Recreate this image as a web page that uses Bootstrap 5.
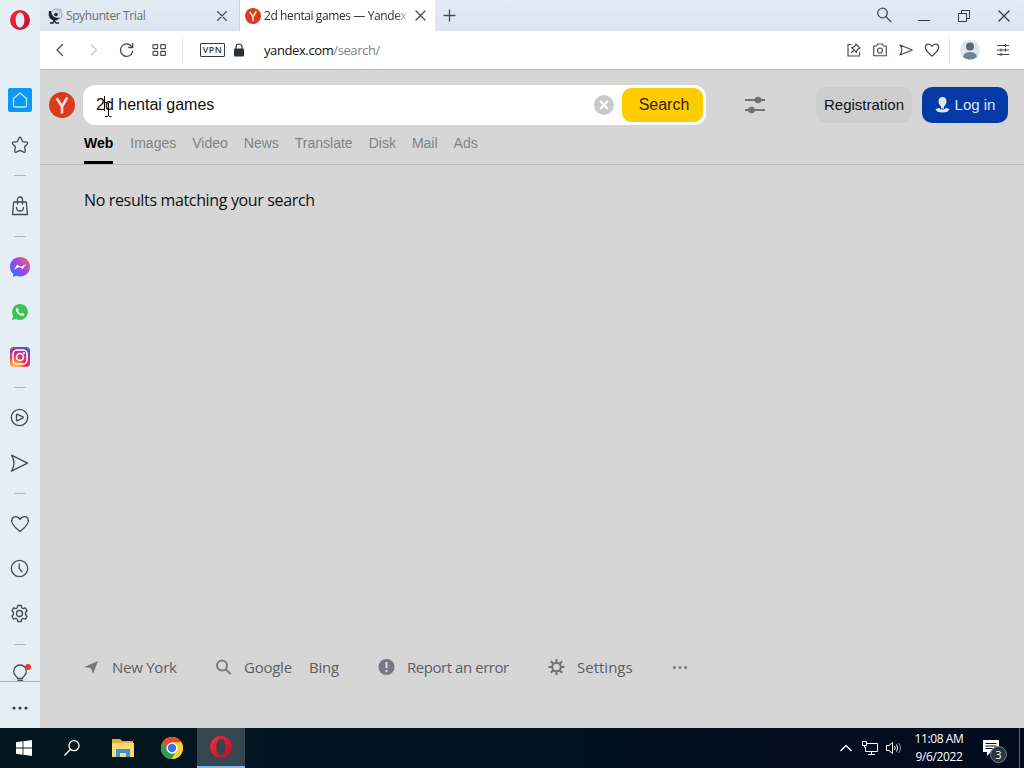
<!DOCTYPE html>
<html lang="en">
<head>
  <meta charset="UTF-8">
  <meta name="viewport" content="width=device-width, initial-scale=1.0">
  <title>2d hentai games — Yandex</title>

  <!-- Bootstrap CSS -->
  <link href="https://cdn.jsdelivr.net/npm/bootstrap@5.3.3/dist/css/bootstrap.min.css" rel="stylesheet">

  <style>
    body {
      width: 1024px;
      height: 768px;
      overflow: hidden;
      background-color: #d6d6d6;
      font-family: "Open Sans", sans-serif;
      font-size: 12px;
      line-height: 1.2;
      color: #111;
    }

    svg {
      display: block;
      flex-shrink: 0;
    }

    .line-icon {
      fill: none;
      stroke: #454b57;
      stroke-width: 1.3;
      stroke-linecap: round;
      stroke-linejoin: round;
    }

    .line-icon.fine {
      stroke-width: 1.15;
    }

    .line-icon.scaled {
      stroke-width: 1.6;
    }

    .workspace {
      height: 728px;
    }

    /* Sidebar */
    .sidebar {
      width: 40px;
      background-color: #e5edf5;
    }

    .side-logo {
      height: 40px;
      margin-bottom: 37px;
    }

    .side-item {
      height: 45px;
    }

    .side-sep {
      height: 16px;
    }

    .side-sep::before {
      content: "";
      width: 12px;
      height: 1px;
      background-color: #a9b6c1;
    }

    .side-bulb {
      height: 30px;
      padding-top: 12px;
      border-bottom: 1px solid #a9b3bd;
    }

    .side-more {
      height: 45px;
      padding-top: 7px;
    }

    /* Tabs and address bar */
    .tab-strip {
      height: 31px;
      background: linear-gradient(#e3ebf4, #dce4ed);
      color: #6b7077;
    }

    .window-tab {
      width: 200px;
      padding: 0 12px 0 8px;
      border-right: 1px solid #cbd3dc;
    }

    .window-tab.current {
      width: 195px;
      padding: 0 9px 0 5px;
      background-color: #fff;
      color: #2b2f36;
      border: 0;
    }

    .tab-title {
      width: 146px;
      margin-left: 3px;
      padding-top: 1px;
      white-space: nowrap;
      line-height: 18px;
      letter-spacing: -.4px;
    }

    .current .tab-title {
      letter-spacing: -.4px;
      -webkit-mask-image: linear-gradient(90deg, #000 90%, transparent);
      mask-image: linear-gradient(90deg, #000 90%, transparent);
    }

    .win-btn {
      width: 40px;
    }

    .address-bar {
      height: 39px;
      padding-left: 3px;
      background-color: #fff;
      border-bottom: 1px solid #b4b4b4;
    }

    .nav-slot {
      width: 33px;
    }

    .tool-slot {
      width: 26px;
    }

    .bar-rule {
      width: 1px;
      height: 27px;
      background-color: #e8e8e8;
    }

    .nav-rule {
      margin-left: 7px;
    }

    .vpn {
      width: 25px;
      height: 14px;
      margin-left: 17px;
      border: 1px solid #333b42;
      border-radius: 1px;
      font-size: 9px;
      font-weight: 600;
      letter-spacing: .4px;
      color: #333b42;
    }

    .url {
      margin-left: 19px;
      padding-top: 1px;
      font-size: 13px;
      letter-spacing: -.4px;
    }

    .url span {
      color: #7c8489;
    }

    .avatar {
      margin-left: 10px;
    }

    .easy-setup {
      margin: 0 15px 0 17px;
    }

    /* Yandex page */
    .ya-head {
      height: 95px;
      border-bottom: 1px solid #bdbdbd;
      font-family: "Liberation Sans", Arial, sans-serif;
    }

    .ya-row {
      height: 40px;
      margin-top: 15px;
      padding-left: 9px;
    }

    .search-box {
      width: 623px;
      height: 40px;
      margin-left: 8px;
      padding: 0 3px 0 13px;
      background-color: #fff;
      border-radius: 12px;
      font-size: 16px;
    }

    .search-btn {
      width: 81px;
      height: 34px;
      margin-left: 8px;
      padding: 0 0 0 3px;
      background-color: #fc0;
      border: 0;
      border-radius: 9px;
      font-size: 16px;
      line-height: 1.2;
      color: #33210a;
    }

    .text-cursor {
      left: 8px;
      top: 1px;
    }

    .filters {
      margin-left: 39px;
    }

    .user-btn {
      height: 36px;
      padding: 0;
      border: 0;
      border-radius: 10px;
      font-size: 15px;
    }

    .btn-reg {
      width: 96px;
      margin-left: 51px;
      background-color: #cecece;
      color: #111;
    }

    .btn-login {
      width: 86px;
      margin-left: 10px;
      background-color: #033aa5;
      color: #dfe6f4;
    }

    .ya-tabs {
      height: 39px;
      padding-left: 44px;
      gap: 16px;
      font-size: 14px;
    }

    .ya-tabs a {
      padding-top: 10px;
      color: #838383;
      text-decoration: none;
    }

    .ya-tabs a.on {
      margin-right: 1px;
      color: #000;
      font-weight: bold;
      border-bottom: 3px solid #000;
    }

    .message {
      padding: 26px 0 0 44px;
      font-size: 16px;
      letter-spacing: -.35px;
    }

    .ya-foot {
      height: 30px;
      margin-bottom: 46px;
      padding-left: 43px;
      font-size: 15px;
      letter-spacing: -.25px;
      color: #5c5e63;
    }

    .foot-city { width: 103px; margin-left: 13px; }
    .foot-google { width: 65px; margin-left: 13px; }
    .foot-bing { width: 69px; }
    .foot-report { width: 141px; margin-left: 12px; letter-spacing: -.45px; }
    .foot-settings { width: 95px; margin-left: 12px; letter-spacing: 0; }

    /* Taskbar */
    .taskbar {
      height: 40px;
      background: linear-gradient(90deg, #021620, #02121f 55%, #020b1c);
      color: #fff;
    }

    .task-slot {
      width: 48px;
      height: 40px;
    }

    .task-slot.files {
      margin-left: 3px;
    }

    .task-slot.chrome {
      margin-left: 1px;
    }

    .task-slot.running {
      margin-left: 1px;
      background-color: #35464f;
      border-bottom: 2px solid #76b9ed;
    }

    .tray {
      gap: 8px;
    }

    .tray-up {
      margin-right: 2px;
    }

    .clock {
      width: 64px;
      margin-left: -3px;
      line-height: 18px;
      letter-spacing: -.4px;
    }

    .notices {
      margin: 0 20px 0 4px;
    }

    .notice-count {
      left: 7px;
      top: 6px;
      width: 17px;
      height: 17px;
      background-color: #2b3640;
      border: 1px solid #78818a;
      border-radius: 50%;
      font-size: 11px;
    }

    .show-desktop {
      width: 5px;
      height: 40px;
      border-left: 1px solid #59616b;
    }
  </style>
</head>

<body>

<!-- Shared shapes -->
<svg width="0" height="0" class="position-absolute">
  <defs>
    <linearGradient id="operaRed" x1="0" y1="0" x2="1" y2="1">
      <stop offset="0" stop-color="#ff2942"/><stop offset="1" stop-color="#b30f26"/>
    </linearGradient>
    <linearGradient id="msgr" x1="0" y1="1" x2="1" y2="0">
      <stop offset="0" stop-color="#0a8cff"/><stop offset=".45" stop-color="#9146f5"/><stop offset="1" stop-color="#ff6268"/>
    </linearGradient>
    <radialGradient id="insta" cx=".25" cy="1.05" r="1.15">
      <stop offset="0" stop-color="#ffd55a"/><stop offset=".25" stop-color="#fa9242"/><stop offset=".5" stop-color="#de365e"/><stop offset=".75" stop-color="#b03795"/><stop offset="1" stop-color="#5358c8"/>
    </radialGradient>
    <symbol id="opera" viewBox="0 0 22 22">
      <path fill="url(#operaRed)" fill-rule="evenodd" d="M11 1a10 10 0 1 1 0 20a10 10 0 0 1 0-20zM11 3.400c-2.500 0-4.400 3.300-4.400 7.600s1.900 7.600 4.400 7.600s4.400-3.300 4.400-7.600s-1.900-7.600-4.400-7.600z"/>
    </symbol>
    <symbol id="yandex" viewBox="0 0 26 26">
      <circle cx="13" cy="13" r="13" fill="#dc3a1c"/>
      <path d="M7.700 6.300l5.300 8.200M18.300 5.300L13 14.500V21.500" fill="none" stroke="#f6dfda" stroke-width="2.700"/>
    </symbol>
    <symbol id="send" viewBox="0 0 20 20">
      <path d="M2 2L18 10L2 18Q7 10 2 2z"/>
    </symbol>
    <symbol id="heart" viewBox="0 0 20 20">
      <path d="M10 17.500C6.500 14.500 1.700 11 1.700 6.900C1.700 4.200 3.500 2.600 5.700 2.600C7.700 2.600 9.100 3.700 10 5.500C10.900 3.700 12.300 2.600 14.300 2.600C16.500 2.600 18.300 4.200 18.300 6.900C18.300 11 13.500 14.500 10 17.500z"/>
    </symbol>
  </defs>
</svg>

<div class="workspace d-flex">

  <nav class="sidebar d-flex flex-column">
    <div class="side-logo d-flex align-items-center justify-content-center"><svg width="22" height="22"><use href="#opera"/></svg></div>
    <div class="side-item d-flex align-items-center justify-content-center">
      <svg width="24" height="24" viewBox="0 0 24 24"><rect width="24" height="24" rx="2" fill="#0d98f5"/><path d="M5.500 10.500L12 5L18.500 10.500V17.500Q18.500 19 17 19H7Q5.500 19 5.500 17.500z" fill="none" stroke="#a9f0ff" stroke-width="1.300" stroke-linejoin="round"/></svg>
    </div>
    <div class="side-item d-flex align-items-center justify-content-center">
      <svg class="line-icon" width="18" height="18" viewBox="0 0 18 18"><path d="M9 1.200Q9.600 1.200 10 2L11.600 5.600L15.700 6.200Q17.300 6.600 16.300 7.900L13.600 10.700L14.300 15Q14.300 16.800 12.700 16.200L9 14.300L5.300 16.200Q3.700 16.800 3.700 15L4.400 10.700L1.700 7.900Q.7 6.600 2.300 6.200L6.400 5.600L8 2Q8.400 1.200 9 1.200z"/></svg>
    </div>
    <div class="side-sep d-flex align-items-center justify-content-center"></div>
    <div class="side-item d-flex align-items-center justify-content-center">
      <svg class="line-icon" width="18" height="20" viewBox="0 0 18 20"><path d="M2.700 6H15.300L16.500 18.500H1.500zM6.500 8V3.500Q6.500 1 9 1T11.500 3.500V8M5.500 11.500Q5.500 15 9 15T12.500 11.500"/></svg>
    </div>
    <div class="side-sep d-flex align-items-center justify-content-center"></div>
    <div class="side-item d-flex align-items-center justify-content-center">
      <svg width="20" height="20" viewBox="0 0 20 20"><path fill="url(#msgr)" d="M10 0C4.300 0 0 4.100 0 9.700c0 2.900 1.200 5.400 3.100 7.100V20l3-1.200c1.200.4 2.500.6 3.900.6c5.700 0 10-4.100 10-9.700S15.700 0 10 0z"/><path d="M4 12.500L7.200 7.600L10.700 9.700L16 7L12.700 12.100L9.300 9.900z" fill="#fff"/></svg>
    </div>
    <div class="side-item d-flex align-items-center justify-content-center">
      <svg width="16" height="16" viewBox="0 0 16 16"><path fill="#3bc257" d="M8 0a8 8 0 1 1-3.900 15L0 16l1.100-4A8 8 0 0 1 8 0z"/><path d="M5.400 3.700C3.300 4.700 3.700 7 5.700 9.300S10.500 12.700 12.200 10.900Q12.500 10.100 11.800 9.700L10.300 9Q9.800 8.800 9.400 9.500Q8.900 10 7.900 9.300Q6.600 8.300 6.100 7.200Q6.700 6.600 6.700 6L6 4.200Q5.800 3.700 5.400 3.700z" fill="#fff"/></svg>
    </div>
    <div class="side-item d-flex align-items-center justify-content-center">
      <svg width="20" height="20" viewBox="0 0 20 20"><rect width="20" height="20" rx="4" fill="url(#insta)"/><g fill="none" stroke="#fff" stroke-width="1.500"><rect x="3" y="3" width="14" height="14" rx="4"/><circle cx="10" cy="10" r="3.500"/></g><circle cx="14" cy="6" r="1" fill="#fff"/></svg>
    </div>
    <div class="side-sep d-flex align-items-center justify-content-center"></div>
    <div class="side-item d-flex align-items-center justify-content-center">
      <svg class="line-icon" width="20" height="19" viewBox="0 0 20 19"><circle cx="9.500" cy="9.500" r="8.200"/><path d="M6.500 6.800Q6.500 6 7.300 6.300L12.800 8.900Q13.800 9.500 12.800 10.100L7.300 12.700Q6.500 13 6.500 12.200z"/></svg>
    </div>
    <div class="side-item d-flex align-items-center justify-content-center"><svg class="line-icon" width="20" height="20" viewBox="0 0 20 20"><path d="M1.500 2.200L17.500 10.200L1.500 18.200Q6.500 10.200 1.500 2.200z"/></svg></div>
    <div class="side-sep d-flex align-items-center justify-content-center"></div>
    <div class="side-item d-flex align-items-center justify-content-center"><svg class="line-icon me-1" width="20" height="20" style="margin-left:3px"><use href="#heart"/></svg></div>
    <div class="side-item d-flex align-items-center justify-content-center">
      <svg class="line-icon" width="20" height="19" viewBox="0 0 20 19"><circle cx="9.500" cy="9.500" r="8.200"/><path d="M9.200 5V9.500L12 12.800"/></svg>
    </div>
    <div class="side-item d-flex align-items-center justify-content-center">
      <svg class="line-icon" width="20" height="19" viewBox="-.5 -.5 20 19"><path d="M7.300 1h3.400l.5 2.300l1.400.8L14.900 3.400l1.700 2.900L15 8v2l1.600 1.700l-1.700 2.900l-2.300-.7l-1.400.8l-.5 2.300H7.300l-.5-2.300l-1.400-.8l-2.300.7l-1.700-2.900L3 10V8L1.400 6.300l1.700-2.900l2.300.7l1.400-.8z"/><circle cx="9" cy="9" r="3"/></svg>
    </div>
    <div class="side-sep d-flex align-items-center justify-content-center"></div>
    <div class="side-bulb d-flex justify-content-center overflow-hidden">
      <svg width="22" height="20" viewBox="0 0 22 20"><path class="line-icon" d="M8.500 14.500Q8.300 13 6.500 11.700A6.300 6.300 0 1 1 15.500 11.700Q13.700 13 13.500 14.500zM9 16.300H13.500"/><circle cx="19" cy="3" r="3" fill="#f2342d"/></svg>
    </div>
    <div class="side-more d-flex align-items-center justify-content-center">
      <svg width="16" height="4" viewBox="0 0 16 4" fill="#3c4350"><circle cx="2" cy="2" r="1.600"/><circle cx="8" cy="2" r="1.600"/><circle cx="14" cy="2" r="1.600"/></svg>
    </div>
  </nav>

  <div class="flex-grow-1 d-flex flex-column">

    <div class="tab-strip d-flex">
      <div class="window-tab d-flex align-items-center">
        <svg width="15" height="16" viewBox="0 0 15 16"><circle cx="8.500" cy="6.500" r="5.500" fill="#d6dfe5" stroke="#96a3ad"/><path d="M8 2.500L13 1L11 6" fill="none" stroke="#abb5bd"/><path d="M1 3Q-.5 10.500 5 12.200Q9 13 12 9.500Q8 10.500 5.500 8.500Q3 6.500 3 3z" fill="#19242d"/><circle cx="8" cy="6.500" r="1.800" fill="#19242d"/><path d="M6 12L5 15H2M6 12L8 15H11" fill="none" stroke="#19242d" stroke-width="1.300"/></svg>
        <div class="tab-title">Spyhunter Trial</div>
        <svg class="line-icon fine ms-auto" width="10" height="10" viewBox="0 0 10 10"><path d="M.5.5l9 9M9.500.5l-9 9"/></svg>
      </div>
      <div class="window-tab current d-flex align-items-center">
        <svg width="16" height="16"><use href="#yandex"/></svg>
        <div class="tab-title">2d hentai games — Yandex</div>
        <svg class="line-icon ms-auto" width="11" height="11" viewBox="0 0 11 11"><path d="M1 1l9 9M10 1l-9 9"/></svg>
      </div>
      <div class="d-flex align-items-center ps-2 flex-grow-1">
        <svg class="line-icon" width="13" height="13" viewBox="0 0 13 13"><path d="M6.500 1v11M1 6.500h11"/></svg>
      </div>
      <div class="d-flex align-items-center">
        <div class="win-btn d-flex justify-content-center"><svg class="line-icon" width="16" height="18" viewBox="0 0 16 18"><circle cx="6.500" cy="6" r="4.800"/><path d="M10 9.700l5 5"/></svg></div>
        <div class="win-btn d-flex justify-content-center"><svg width="12" height="12" viewBox="0 0 12 12"><path d="M0 10.500h12" stroke="#333945"/></svg></div>
        <div class="win-btn d-flex justify-content-center"><svg width="12" height="12" viewBox="0 0 12 12" fill="none" stroke="#333945"><path d="M.5 3.500h8v8h-8zM3.500 3.500v-3h8v8h-3"/></svg></div>
        <div class="win-btn d-flex justify-content-center"><svg width="12" height="12" viewBox="0 0 12 12" stroke="#333945" stroke-width="1.200"><path d="M.5.5l11 11M11.500.5l-11 11"/></svg></div>
      </div>
    </div>

    <div class="address-bar d-flex align-items-center">
      <div class="nav-slot d-flex justify-content-center"><svg class="line-icon" width="14" height="14" viewBox="0 0 14 14"><path d="M9.500 1.500L4 7l5.500 5.500"/></svg></div>
      <div class="nav-slot d-flex justify-content-center"><svg width="14" height="14" viewBox="0 0 14 14" fill="none" stroke="#c6c8cb" stroke-width="1.300"><path d="M5 1.500L10.500 7L5 12.500"/></svg></div>
      <div class="nav-slot d-flex justify-content-center"><svg class="line-icon" width="16" height="16" viewBox="0 0 16 16"><path d="M14.700 9.500A6.200 6.200 0 1 1 14 5M14.700 1.700V5.500H10.700"/></svg></div>
      <div class="nav-slot d-flex justify-content-center"><svg class="line-icon fine" width="14" height="12" viewBox="0 0 14 12"><rect x="1" y=".6" width="4.700" height="4" rx=".7"/><rect x="8.700" y=".6" width="4.700" height="4" rx=".7"/><rect x="1" y="7.400" width="4.700" height="4" rx=".7"/><rect x="8.700" y="7.400" width="4.700" height="4" rx=".7"/></svg></div>
      <div class="bar-rule nav-rule"></div>
      <div class="vpn d-flex align-items-center justify-content-center">VPN</div>
      <svg class="ms-2" width="12" height="14" viewBox="0 0 12 14"><rect x="1" y="5.500" width="10" height="8" rx="1" fill="#2a3138"/><path d="M3 6V4Q3 1 6 1T9 4V6" fill="none" stroke="#2a3138" stroke-width="1.200"/></svg>
      <div class="url flex-grow-1">yandex.com<span>/search/</span></div>
      <div class="tool-slot d-flex justify-content-center"><svg class="line-icon fine" width="14" height="14" viewBox="0 0 14 14"><path d="M4 1.500H1V13H12.500V9.500M4.500 9.500L7 7M8.800 1L13 5.200L11.600 5.500L9.700 7.600L9.500 9.500L4.600 4.600L6.500 4.300L8.600 2.400z"/></svg></div>
      <div class="tool-slot d-flex justify-content-center"><svg class="line-icon fine" width="14" height="14" viewBox="0 0 14 14"><path d="M.7 3h2.800l1.200-2h4.600l1.200 2h2.800v9.700H.7z"/><circle cx="7" cy="7.500" r="2.500"/></svg></div>
      <div class="tool-slot d-flex justify-content-center"><svg class="line-icon fine" width="14" height="14" viewBox="0 0 14 14"><path d="M1 2L13.300 7L1 12Q4.500 7 1 2z"/></svg></div>
      <div class="tool-slot d-flex justify-content-center"><svg class="line-icon scaled" width="16" height="16"><use href="#heart"/></svg></div>
      <div class="bar-rule ms-1"></div>
      <svg class="avatar" width="20" height="20" viewBox="0 0 20 20"><circle cx="10" cy="10" r="10" fill="#d9e5ef"/><circle cx="10" cy="6.500" r="4" fill="#5c6674"/><path d="M3 17Q4 12 10 12T17 17Q10 22 3 17z" fill="#738091"/></svg>
      <svg class="easy-setup" width="12" height="12" viewBox="0 0 12 12" fill="none" stroke="#3c424c"><path d="M0 1.500h12M0 6h12M0 10.500h12M8.500 0v3M4 4.500v3M8.500 4.500v3M4 9v3"/></svg>
    </div>

    <header class="ya-head d-flex flex-column">
      <div class="ya-row d-flex align-items-center">
        <svg width="26" height="26"><use href="#yandex"/></svg>
        <div class="search-box d-flex align-items-center">
          <div class="position-relative">2d hentai games
            <svg class="text-cursor position-absolute" width="10" height="22" viewBox="0 0 10 22" fill="none" stroke="#000"><path d="M.5 0v15M1 6.500h2l1 1l1-1h2M4.500 7v13M1 20.500h2l1.500-1l1 1h2"/></svg>
          </div>
          <svg class="ms-auto" width="20" height="20" viewBox="0 0 20 20"><circle cx="10" cy="10" r="10" fill="#c9c9c9"/><path d="M6 6l8 8M14 6l-8 8" stroke="#fff" stroke-width="2"/></svg>
          <button class="btn search-btn">Search</button>
        </div>
        <svg class="filters" width="20" height="18" viewBox="0 0 20 18" fill="#707376"><path d="M0 3h20v2H0zM0 13h20v2H0z"/><circle cx="13" cy="4" r="3.300"/><circle cx="6.500" cy="14" r="3.300"/></svg>
        <button class="btn user-btn btn-reg">Registration</button>
        <button class="btn user-btn btn-login d-flex align-items-center justify-content-center">
          <svg class="me-1" width="16" height="16" viewBox="0 0 16 16" fill="#dfe6f4"><path d="M7.500 0C4.900 0 3.500 1.800 3.500 4.300C3.500 6.800 4.600 8.400 6 9.200V11.500H9V9.200C10.400 8.400 11.500 6.800 11.500 4.300C11.500 1.800 10.100 0 7.500 0z"/><path d="M.5 12L4 11Q7.500 14 11 11L14.500 12Q13.500 15.600 7.500 15.600T.5 12z"/></svg>
          Log in
        </button>
      </div>
      <nav class="ya-tabs d-flex">
        <a href="#" class="on">Web</a>
        <a href="#">Images</a>
        <a href="#">Video</a>
        <a href="#">News</a>
        <a href="#">Translate</a>
        <a href="#">Disk</a>
        <a href="#">Mail</a>
        <a href="#">Ads</a>
      </nav>
    </header>

    <main class="message flex-grow-1">No results matching your search</main>

    <footer class="ya-foot d-flex align-items-center">
      <svg width="16" height="16" viewBox="0 0 16 16"><path d="M1 8L15 2L10 15L7.800 9z" fill="#74787d"/></svg>
      <div class="foot-city">New York</div>
      <svg width="16" height="16" viewBox="0 0 16 16" fill="none" stroke="#777b80" stroke-width="2"><circle cx="7" cy="6.500" r="5"/><path d="M10.700 10.200L15.500 15"/></svg>
      <div class="foot-google">Google</div>
      <div class="foot-bing">Bing</div>
      <svg width="17" height="16" viewBox="0 0 16 16"><circle cx="8" cy="8" r="8" fill="#777983"/><path d="M8 3v6M8 11v2" stroke="#e0e0e0" stroke-width="2"/></svg>
      <div class="foot-report">Report an error</div>
      <svg width="17" height="16" viewBox="0 0 16 16" fill="none" stroke="#6d7277"><circle cx="8" cy="8" r="4.300" stroke-width="2"/><path d="M8 0v3.500M8 12.500V16M0 8h3.500M12.500 8H16M2.300 2.300l2.500 2.500M11.200 11.200l2.500 2.500M13.700 2.300l-2.500 2.500M4.800 11.200l-2.500 2.500" stroke-width="2"/></svg>
      <div class="foot-settings">Settings</div>
      <svg width="16" height="4" viewBox="0 0 16 4" fill="#74787d"><circle cx="2.500" cy="2.500" r="1.500"/><circle cx="8" cy="2.500" r="1.500"/><circle cx="13.500" cy="2.500" r="1.500"/></svg>
    </footer>
  </div>
</div>

<div class="taskbar d-flex align-items-center">
  <div class="task-slot d-flex align-items-center justify-content-center"><svg width="16" height="16" viewBox="0 0 16 16" fill="#fff"><path d="M0 2.200L6.600 1.300V7.600H0zM7.400 1.200L16 0V7.600H7.400zM0 8.400H6.600V14.700L0 13.800zM7.400 8.400H16V16L7.400 14.800z"/></svg></div>
  <div class="task-slot d-flex align-items-center justify-content-center"><svg width="16" height="16" viewBox="0 0 16 16" fill="none" stroke="#fff" stroke-width="1.300"><circle cx="10" cy="5.700" r="5"/><path d="M6.500 9.300L.5 15.500"/></svg></div>
  <div class="task-slot files d-flex align-items-center justify-content-center">
    <svg width="22" height="18" viewBox="0 0 22 18"><path d="M0 0H8L10 2H21V17H0z" fill="#e9ae36"/><path d="M0 4H22V18H0z" fill="#fbdc72"/><path d="M4 18V10H18V18H14V14H8V18z" fill="#3f92c9"/></svg>
  </div>
  <div class="task-slot chrome d-flex align-items-center justify-content-center">
    <svg width="22" height="22" viewBox="0 0 22 22"><circle cx="11" cy="11" r="11" fill="#f8cd35"/><path d="M1.500 5.500A11 11 0 0 1 20.500 5.500H11L6.200 13.700z" fill="#df4b37"/><path d="M1.500 5.500L6.200 13.700Q8 16.500 11 16.500H15L10.500 22A11 11 0 0 1 1.500 5.500z" fill="#2b9d50"/><path d="M15.700 8.200L15.700 13.700L10.500 22A11 11 0 0 0 20.500 5.500H11z" fill="#f8cd35"/><circle cx="11" cy="11" r="5.500" fill="#fff"/><circle cx="11" cy="11" r="4.200" fill="#3c71e4"/></svg>
  </div>
  <div class="task-slot running d-flex align-items-center justify-content-center"><svg width="24" height="24"><use href="#opera"/></svg></div>

  <div class="tray d-flex align-items-center ms-auto">
    <svg class="tray-up" width="12" height="8" viewBox="0 0 12 8" fill="none" stroke="#fff" stroke-width="1.400"><path d="M.5 7L6 1.500L11.500 7"/></svg>
    <svg width="16" height="14" viewBox="0 0 16 14" fill="none" stroke="#fff"><path d="M5 2.500H15.500V10.500H3.500V6M9.500 10.500V13.500M6 13.500H13M.5.500H4.500V4.500H.5zM2.500 4.500V6.500"/></svg>
    <svg width="16" height="14" viewBox="0 0 16 14" fill="none" stroke="#fff"><path d="M.5 4.500H3L6.500 1.500V12.500L3 9.500H.5zM8.500 5Q10 7 8.500 9M10.500 3.500Q13 7 10.500 10.500"/><path d="M12.500 2Q16.500 7 12.500 12" stroke="#889099"/></svg>
    <div class="clock text-center">11:08 AM<br>9/6/2022</div>
    <div class="notices position-relative">
      <svg width="16" height="16" viewBox="0 0 16 16"><path d="M0 0H16V12H8L4 16V12H0z" fill="#fff"/><path d="M2.500 3.500h11M2.500 6h11M2.500 8.500h7" stroke="#07101d"/></svg>
      <div class="notice-count position-absolute d-flex align-items-center justify-content-center">3</div>
    </div>
  </div>
  <div class="show-desktop"></div>
</div>

<!-- Bootstrap Bundle (JS + Popper) -->
<script src="https://cdn.jsdelivr.net/npm/bootstrap@5.3.3/dist/js/bootstrap.bundle.min.js"></script>

</body>
</html>
